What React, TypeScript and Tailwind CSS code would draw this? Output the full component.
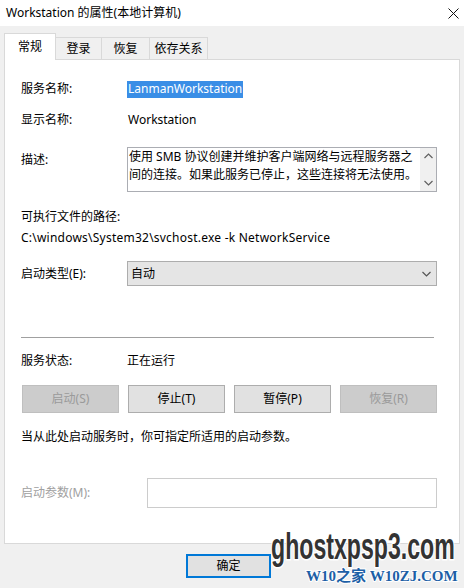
import React from "react";

const labelCls = "w-[106px] shrink-0";

function Chevron({ up = false, className = "" }: { up?: boolean; className?: string }) {
  return (
    <svg width="9" height="6" viewBox="0 0 9 6" className={className}>
      <path
        d={up ? "M0.5 5 L4.5 1 L8.5 5" : "M0.5 1 L4.5 5 L8.5 1"}
        fill="none"
        stroke="currentColor"
        strokeWidth="1.2"
      />
    </svg>
  );
}

function Btn({ label, disabled = false }: { label: string; disabled?: boolean }) {
  return (
    <div
      className={
        disabled
          ? "h-[28px] flex items-center justify-center border border-[#bfbfbf] bg-[#cccccc] text-[#9a9a9a]"
          : "h-[28px] flex items-center justify-center border border-[#adadad] bg-[#e1e1e1] text-black"
      }
    >
      {label}
    </div>
  );
}

export default function App() {
  return (
    <div className="relative w-[464px] h-[588px] overflow-hidden bg-[#f0f0f0] text-[12px] leading-[18px] text-black font-['Noto_Sans','Noto_Sans_CJK_SC',sans-serif]">
      {/* Title bar */}
      <div className="h-[26px] bg-white flex items-center justify-between pl-[6px] pr-[5px]">
        <span>Workstation 的属性(本地计算机)</span>
        <svg width="11" height="11" viewBox="0 0 11 11">
          <path d="M0.5 0.5 L10.5 10.5 M10.5 0.5 L0.5 10.5" stroke="#111" strokeWidth="1" />
        </svg>
      </div>

      {/* Tabs */}
      <div className="flex items-end h-[33px] pl-[4px]">
        <div className="relative z-10 -mb-px h-[27px] w-[52px] bg-white border border-b-0 border-[#d9d9d9] flex items-center justify-center">
          常规
        </div>
        <div className="h-[22px] w-[46px] border-t border-r border-[#d9d9d9] flex items-center justify-center">登录</div>
        <div className="h-[22px] w-[48px] border-t border-r border-[#d9d9d9] flex items-center justify-center">恢复</div>
        <div className="h-[22px] w-[58px] border-t border-r border-[#d9d9d9] flex items-center justify-center">依存关系</div>
      </div>

      {/* Panel */}
      <div className="mx-[4px] h-[485px] border border-[#d9d9d9] bg-white pl-[16px] pr-[22px]">
        <div className="mt-[20px] h-[18px] flex items-center">
          <span className={labelCls}>服务名称:</span>
          <span className="h-[17px] px-[1px] flex items-center bg-[#3a8ee6] text-white">LanmanWorkstation</span>
        </div>

        <div className="mt-[13px] h-[18px] flex items-center">
          <span className={labelCls}>显示名称:</span>
          <span className="pl-[1px]">Workstation</span>
        </div>

        <div className="mt-[18px] flex items-start">
          <span className={`${labelCls} pt-[4px]`}>描述:</span>
          <div className="flex-1 h-[45px] border border-[#abadb3] flex">
            <div className="flex-1 pl-[1px] whitespace-nowrap">
              <div>使用 SMB 协议创建并维护客户端网络与远程服务器之</div>
              <div>间的连接。如果此服务已停止，这些连接将无法使用。</div>
            </div>
            <div className="w-[16px] bg-[#f0f0f0] flex flex-col items-center justify-between py-[5px] text-[#606060]">
              <Chevron up />
              <Chevron />
            </div>
          </div>
        </div>

        <div className="mt-[16px]">可执行文件的路径:</div>
        <div className="mt-[3px] whitespace-nowrap tracking-[0.23px]">C:\windows\System32\svchost.exe -k NetworkService</div>

        <div className="mt-[14px] flex items-center">
          <span className={labelCls}>启动类型(E):</span>
          <div className="flex-1 h-[25px] border border-[#adadad] bg-[#e5e5e5] flex items-center justify-between pl-[3px] pr-[5px]">
            <span>自动</span>
            <Chevron className="text-[#555]" />
          </div>
        </div>

        <div className="mt-[51px] mr-[3px] h-px bg-[#a0a0a0]" />

        <div className="mt-[14px] h-[18px] flex items-center">
          <span className={labelCls}>服务状态:</span>
          <span>正在运行</span>
        </div>

        <div className="mt-[15px] ml-[1px] grid grid-cols-4 gap-[9px]">
          <Btn label="启动(S)" disabled />
          <Btn label="停止(T)" />
          <Btn label="暂停(P)" />
          <Btn label="恢复(R)" disabled />
        </div>

        <div className="mt-[15px] whitespace-nowrap">当从此处启动服务时，你可指定所适用的启动参数。</div>

        <div className="mt-[32px] flex items-center">
          <span className="w-[126px] shrink-0 text-[#a0a0a0]">启动参数(M):</span>
          <div className="flex-1 h-[30px] border border-[#cccccc] bg-white" />
        </div>
      </div>

      {/* Dialog buttons */}
      <div className="mt-[10px] ml-[186px] w-[85px] h-[24px] border-2 border-[#0078d7] bg-[#e1e1e1] flex items-center justify-center">
        确定
      </div>

      {/* Watermark */}
      <div className="absolute left-[271px] top-[523px] origin-left scale-x-[0.625] whitespace-nowrap font-['Liberation_Sans',sans-serif] font-bold text-[37px] leading-[48px] text-[#333333] [-webkit-text-stroke:3px_#ffffff] [paint-order:stroke_fill]">
        ghostxpsp3.com
      </div>
      <div className="absolute left-[306px] top-[567px] whitespace-nowrap font-['Liberation_Serif','Noto_Sans_CJK_SC',serif] font-bold text-[15px] leading-[18px] text-[#1d5fa6] [-webkit-text-stroke:2px_#ffffff] [paint-order:stroke_fill]">
        W10之家 W10ZJ.COM
      </div>
    </div>
  );
}
